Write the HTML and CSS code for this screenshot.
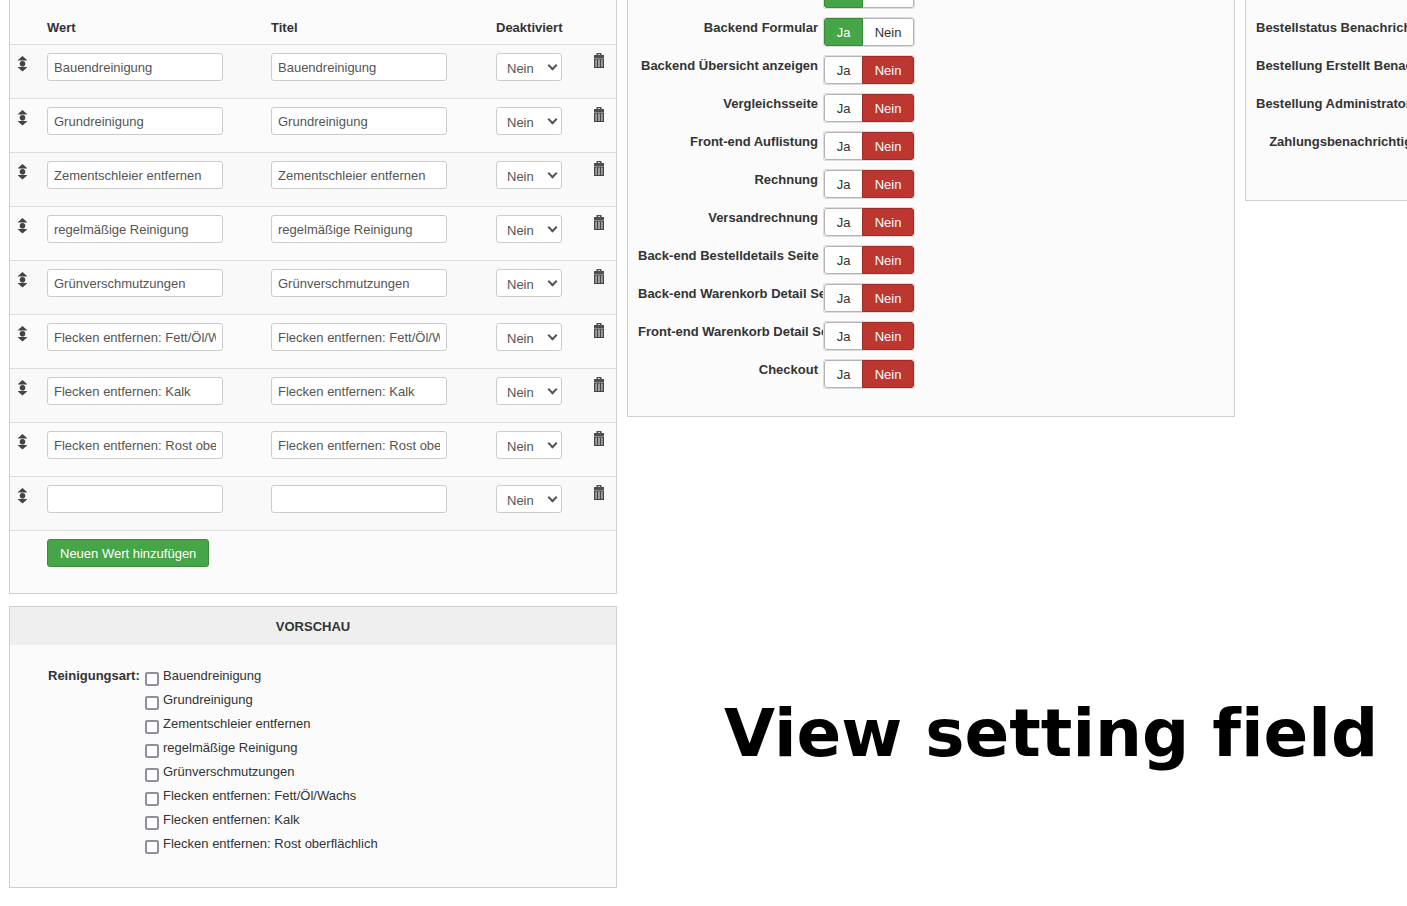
FILE: index.html
```
<!DOCTYPE html>
<html lang="de">
<head>
	<meta charset="utf-8">
	<meta name="viewport" content="width=device-width">
	<title>View setting field</title>
	<link rel="stylesheet" href="styles.css">
</head>
<body>

	<svg class="symbols" aria-hidden="true">
		<symbol id="move" viewBox="0 0 9 16">
			<path d="M4.5 0 9 4v.6H0V4zM4.5 15.6 0 11.6V11h9v.6z"/>
			<circle cx="4.5" cy="7.8" r="2.8"/>
		</symbol>
		<symbol id="trash" viewBox="0 0 12 16">
			<path fill-rule="evenodd" d="M3.5 0h5v2H11v3H1V2h2.500zM5 1.200V2h2v-.8z" opacity=".95"/>
			<path d="M1 5.500h10V15H1z" opacity=".5"/>
			<path d="M1 5.500h10v1H1zM1 14h10v1H1zM1 6h1.200v9H1zM9.800 6H11v9H9.800zM4 6h1v9H4zM7 6h1v9H7z"/>
		</symbol>
	</svg>

	<main class="page">
		<div class="column">
			<section class="card values">
				<table>
					<colgroup>
						<col class="col-move">
						<col class="col-value">
						<col class="col-title">
						<col>
						<col class="col-delete">
					</colgroup>
					<thead>
						<tr>
							<th></th>
							<th>Wert</th>
							<th>Titel</th>
							<th>Deaktiviert</th>
							<th></th>
						</tr>
					</thead>
					<tbody>
						<tr>
							<td><button type="button" class="icon" aria-label="Verschieben"><svg class="move"><use href="#move"/></svg></button></td>
							<td><input type="text" class="text" aria-label="Wert" value="Bauendreinigung"></td>
							<td><input type="text" class="text" aria-label="Titel" value="Bauendreinigung"></td>
							<td><span class="select"><select aria-label="Deaktiviert"><option>Nein</option><option>Ja</option></select></span></td>
							<td><button type="button" class="icon" aria-label="Löschen"><svg class="trash"><use href="#trash"/></svg></button></td>
						</tr>
						<tr>
							<td><button type="button" class="icon" aria-label="Verschieben"><svg class="move"><use href="#move"/></svg></button></td>
							<td><input type="text" class="text" aria-label="Wert" value="Grundreinigung"></td>
							<td><input type="text" class="text" aria-label="Titel" value="Grundreinigung"></td>
							<td><span class="select"><select aria-label="Deaktiviert"><option>Nein</option><option>Ja</option></select></span></td>
							<td><button type="button" class="icon" aria-label="Löschen"><svg class="trash"><use href="#trash"/></svg></button></td>
						</tr>
						<tr>
							<td><button type="button" class="icon" aria-label="Verschieben"><svg class="move"><use href="#move"/></svg></button></td>
							<td><input type="text" class="text" aria-label="Wert" value="Zementschleier entfernen"></td>
							<td><input type="text" class="text" aria-label="Titel" value="Zementschleier entfernen"></td>
							<td><span class="select"><select aria-label="Deaktiviert"><option>Nein</option><option>Ja</option></select></span></td>
							<td><button type="button" class="icon" aria-label="Löschen"><svg class="trash"><use href="#trash"/></svg></button></td>
						</tr>
						<tr>
							<td><button type="button" class="icon" aria-label="Verschieben"><svg class="move"><use href="#move"/></svg></button></td>
							<td><input type="text" class="text" aria-label="Wert" value="regelmäßige Reinigung"></td>
							<td><input type="text" class="text" aria-label="Titel" value="regelmäßige Reinigung"></td>
							<td><span class="select"><select aria-label="Deaktiviert"><option>Nein</option><option>Ja</option></select></span></td>
							<td><button type="button" class="icon" aria-label="Löschen"><svg class="trash"><use href="#trash"/></svg></button></td>
						</tr>
						<tr>
							<td><button type="button" class="icon" aria-label="Verschieben"><svg class="move"><use href="#move"/></svg></button></td>
							<td><input type="text" class="text" aria-label="Wert" value="Grünverschmutzungen"></td>
							<td><input type="text" class="text" aria-label="Titel" value="Grünverschmutzungen"></td>
							<td><span class="select"><select aria-label="Deaktiviert"><option>Nein</option><option>Ja</option></select></span></td>
							<td><button type="button" class="icon" aria-label="Löschen"><svg class="trash"><use href="#trash"/></svg></button></td>
						</tr>
						<tr>
							<td><button type="button" class="icon" aria-label="Verschieben"><svg class="move"><use href="#move"/></svg></button></td>
							<td><input type="text" class="text" aria-label="Wert" value="Flecken entfernen: Fett/Öl/Wachs"></td>
							<td><input type="text" class="text" aria-label="Titel" value="Flecken entfernen: Fett/Öl/Wachs"></td>
							<td><span class="select"><select aria-label="Deaktiviert"><option>Nein</option><option>Ja</option></select></span></td>
							<td><button type="button" class="icon" aria-label="Löschen"><svg class="trash"><use href="#trash"/></svg></button></td>
						</tr>
						<tr>
							<td><button type="button" class="icon" aria-label="Verschieben"><svg class="move"><use href="#move"/></svg></button></td>
							<td><input type="text" class="text" aria-label="Wert" value="Flecken entfernen: Kalk"></td>
							<td><input type="text" class="text" aria-label="Titel" value="Flecken entfernen: Kalk"></td>
							<td><span class="select"><select aria-label="Deaktiviert"><option>Nein</option><option>Ja</option></select></span></td>
							<td><button type="button" class="icon" aria-label="Löschen"><svg class="trash"><use href="#trash"/></svg></button></td>
						</tr>
						<tr>
							<td><button type="button" class="icon" aria-label="Verschieben"><svg class="move"><use href="#move"/></svg></button></td>
							<td><input type="text" class="text" aria-label="Wert" value="Flecken entfernen: Rost oberflächlich"></td>
							<td><input type="text" class="text" aria-label="Titel" value="Flecken entfernen: Rost oberflächlich"></td>
							<td><span class="select"><select aria-label="Deaktiviert"><option>Nein</option><option>Ja</option></select></span></td>
							<td><button type="button" class="icon" aria-label="Löschen"><svg class="trash"><use href="#trash"/></svg></button></td>
						</tr>
						<tr>
							<td><button type="button" class="icon" aria-label="Verschieben"><svg class="move"><use href="#move"/></svg></button></td>
							<td><input type="text" class="text" aria-label="Wert"></td>
							<td><input type="text" class="text" aria-label="Titel"></td>
							<td><span class="select"><select aria-label="Deaktiviert"><option>Nein</option><option>Ja</option></select></span></td>
							<td><button type="button" class="icon" aria-label="Löschen"><svg class="trash"><use href="#trash"/></svg></button></td>
						</tr>
					</tbody>
					<tfoot>
						<tr>
							<td></td>
							<td colspan="4"><button type="button" class="add">Neuen Wert hinzufügen</button></td>
						</tr>
					</tfoot>
				</table>
			</section>

			<section class="card preview">
				<h2>Vorschau</h2>
				<div class="preview-body">
					<strong id="preview-label">Reinigungsart:</strong>
					<div class="checks" role="group" aria-labelledby="preview-label">
						<label><input type="checkbox">Bauendreinigung</label>
						<label><input type="checkbox">Grundreinigung</label>
						<label><input type="checkbox">Zementschleier entfernen</label>
						<label><input type="checkbox">regelmäßige Reinigung</label>
						<label><input type="checkbox">Grünverschmutzungen</label>
						<label><input type="checkbox">Flecken entfernen: Fett/Öl/Wachs</label>
						<label><input type="checkbox">Flecken entfernen: Kalk</label>
						<label><input type="checkbox">Flecken entfernen: Rost oberflächlich</label>
					</div>
				</div>
			</section>
		</div>

		<section class="card display">
			<div class="setting">
				<span class="name"></span>
				<div class="toggle" role="radiogroup" aria-label="Anzeigen">
					<input type="radio" name="s0" id="s0-1" checked><label class="yes" for="s0-1">Ja</label>
					<input type="radio" name="s0" id="s0-0"><label class="no" for="s0-0">Nein</label>
				</div>
			</div>
			<div class="setting">
				<span class="name" id="s1">Backend Formular</span>
				<div class="toggle" role="radiogroup" aria-labelledby="s1">
					<input type="radio" name="s1" id="s1-1" checked><label class="yes" for="s1-1">Ja</label>
					<input type="radio" name="s1" id="s1-0"><label class="no" for="s1-0">Nein</label>
				</div>
			</div>
			<div class="setting">
				<span class="name" id="s2">Backend Übersicht anzeigen</span>
				<div class="toggle" role="radiogroup" aria-labelledby="s2">
					<input type="radio" name="s2" id="s2-1"><label class="yes" for="s2-1">Ja</label>
					<input type="radio" name="s2" id="s2-0" checked><label class="no" for="s2-0">Nein</label>
				</div>
			</div>
			<div class="setting">
				<span class="name" id="s3">Vergleichsseite</span>
				<div class="toggle" role="radiogroup" aria-labelledby="s3">
					<input type="radio" name="s3" id="s3-1"><label class="yes" for="s3-1">Ja</label>
					<input type="radio" name="s3" id="s3-0" checked><label class="no" for="s3-0">Nein</label>
				</div>
			</div>
			<div class="setting">
				<span class="name" id="s4">Front-end Auflistung</span>
				<div class="toggle" role="radiogroup" aria-labelledby="s4">
					<input type="radio" name="s4" id="s4-1"><label class="yes" for="s4-1">Ja</label>
					<input type="radio" name="s4" id="s4-0" checked><label class="no" for="s4-0">Nein</label>
				</div>
			</div>
			<div class="setting">
				<span class="name" id="s5">Rechnung</span>
				<div class="toggle" role="radiogroup" aria-labelledby="s5">
					<input type="radio" name="s5" id="s5-1"><label class="yes" for="s5-1">Ja</label>
					<input type="radio" name="s5" id="s5-0" checked><label class="no" for="s5-0">Nein</label>
				</div>
			</div>
			<div class="setting">
				<span class="name" id="s6">Versandrechnung</span>
				<div class="toggle" role="radiogroup" aria-labelledby="s6">
					<input type="radio" name="s6" id="s6-1"><label class="yes" for="s6-1">Ja</label>
					<input type="radio" name="s6" id="s6-0" checked><label class="no" for="s6-0">Nein</label>
				</div>
			</div>
			<div class="setting">
				<span class="name" id="s7">Back-end Bestelldetails Seite</span>
				<div class="toggle" role="radiogroup" aria-labelledby="s7">
					<input type="radio" name="s7" id="s7-1"><label class="yes" for="s7-1">Ja</label>
					<input type="radio" name="s7" id="s7-0" checked><label class="no" for="s7-0">Nein</label>
				</div>
			</div>
			<div class="setting">
				<span class="name" id="s8">Back-end Warenkorb Detail Seite</span>
				<div class="toggle" role="radiogroup" aria-labelledby="s8">
					<input type="radio" name="s8" id="s8-1"><label class="yes" for="s8-1">Ja</label>
					<input type="radio" name="s8" id="s8-0" checked><label class="no" for="s8-0">Nein</label>
				</div>
			</div>
			<div class="setting">
				<span class="name" id="s9">Front-end Warenkorb Detail Seite</span>
				<div class="toggle" role="radiogroup" aria-labelledby="s9">
					<input type="radio" name="s9" id="s9-1"><label class="yes" for="s9-1">Ja</label>
					<input type="radio" name="s9" id="s9-0" checked><label class="no" for="s9-0">Nein</label>
				</div>
			</div>
			<div class="setting">
				<span class="name" id="s10">Checkout</span>
				<div class="toggle" role="radiogroup" aria-labelledby="s10">
					<input type="radio" name="s10" id="s10-1"><label class="yes" for="s10-1">Ja</label>
					<input type="radio" name="s10" id="s10-0" checked><label class="no" for="s10-0">Nein</label>
				</div>
			</div>
		</section>

		<section class="card mails">
			<div class="setting"><span class="name">Bestellstatus Benachrichtigung</span></div>
			<div class="setting"><span class="name">Bestellung Erstellt Benachrichtigung</span></div>
			<div class="setting"><span class="name">Bestellung Administrator Benachrichtigung</span></div>
			<div class="setting"><span class="name">Zahlungsbenachrichtigung</span></div>
		</section>

		<h1>View setting field</h1>
	</main>

</body>
</html>
```
FILE: styles.css
```
*,
*::after {
	box-sizing: border-box;
}

body {
	margin: 0;
	overflow-x: hidden;
	background-color: #FFF;
	color: #333;
	font-family: "Liberation Sans", Arial, sans-serif;
	font-size: 13px;
	line-height: 20px;
}

input,
select,
button {
	margin: 0;
	font: inherit;
}

.symbols {
	display: none;
}

.page {
	display: grid;
	grid-template-columns: repeat(3, minmax(608px, 1fr));
	grid-template-rows: auto 1fr;
	column-gap: 10px;
	align-items: start;
	padding-left: 9px;
}

.column {
	grid-row: span 2;
}

.card {
	border: 1px solid #D0D0D0;
	background-color: #FBFBFB;
}

/* values table */

.values {
	padding-bottom: 9px;
	border-top: 0;
}

table {
	width: 100%;
	table-layout: fixed;
	border-spacing: 0;
}

.col-move {
	width: 29px;
}
.col-value {
	width: 224px;
}
.col-title {
	width: 225px;
}
.col-delete {
	width: 31px;
}

th {
	height: 44px;
	padding: 8px 8px 6px;
	text-align: left;
	vertical-align: bottom;
}

td {
	height: 54px;
	padding: 8px;
	border-top: 1px solid #DDD;
	vertical-align: top;
}

td:last-child {
	padding-right: 0;
}

tbody tr:nth-child(odd) {
	background-color: #F9F9F9;
}

.text,
select {
	display: block;
	height: 28px;
	border: 1px solid #CCC;
	border-radius: 3px;
	background-color: #FFF;
	color: #555;
}

.text {
	width: 176px;
	padding: 4px 6px;
}

.select {
	position: relative;
	display: block;
	width: 66px;
}
.select::after {
	content: "";
	position: absolute;
	top: 9px;
	right: 6px;
	width: 7px;
	height: 7px;
	border: solid #555;
	border-width: 0 2px 2px 0;
	transform: rotate(45deg);
	pointer-events: none;
}

select {
	width: 100%;
	padding: 5px 10px 4px;
	appearance: none;
}

.icon {
	display: block;
	padding: 0;
	border: 0;
	background: none;
	color: #444;
}

.icon svg {
	display: block;
	height: 16px;
	fill: currentColor;
}

.move {
	width: 9px;
	margin-top: 3px;
}

.trash {
	width: 12px;
}

.add {
	display: block;
	height: 28px;
	padding: 5px 12px 3px;
	border: 1px solid #3B8A3B;
	border-radius: 3px;
	background-color: #46A546;
	color: #FFF;
	line-height: 18px;
}

/* preview */

.preview {
	margin-top: 12px;
}

.preview h2 {
	margin: 0;
	padding: 10px 10px 8px;
	background-color: #EFEFEF;
	font-size: 13px;
	line-height: 20px;
	text-align: center;
	text-transform: uppercase;
}

.preview-body {
	display: flex;
	padding: 21px 38px 29px;
}

.preview-body strong {
	width: 97px;
}

.checks label {
	display: flex;
	height: 24px;
}

.checks input {
	width: 14px;
	height: 14px;
	margin: 6px 4px 0 0;
	border: 2px solid #8F8F9D;
	border-radius: 2px;
	background-color: #FFF;
	appearance: none;
}
.checks input:checked {
	background-color: #46A546;
}

/* yes/no settings */

.display,
.mails {
	overflow: hidden;
	border-top: 0;
	padding: 0 10px 18px;
}

.display .setting:first-child {
	margin-top: -20px;
}

.mails {
	padding: 18px 10px 30px;
}

.setting {
	display: flex;
	gap: 6px;
	height: 28px;
	margin-bottom: 10px;
}

.name {
	flex: none;
	width: 180px;
	font-weight: bold;
	text-align: right;
	white-space: nowrap;
}

.toggle {
	position: relative;
	display: flex;
	border-radius: 2px;
	background-color: #FFF;
	box-shadow: 0 0 0 1px #DDD;
}

.toggle input {
	position: absolute;
	opacity: 0;
}

.toggle label {
	height: 28px;
	padding: 4px 0;
	border: 1px solid #B3B3B3;
	text-align: center;
	cursor: pointer;
}

.yes {
	width: 39px;
	border-radius: 3px 0 0 3px;
}

.no {
	width: 52px;
	margin-left: -1px;
	border-radius: 0 3px 3px 0;
}

.toggle input:checked + label {
	z-index: 1;
	color: #FFF;
}
.toggle input:checked + .yes {
	border-color: #3B8A3B;
	background-color: #46A546;
}
.toggle input:checked + .no {
	border-color: #9B2C27;
	background-color: #BD362F;
}

h1 {
	grid-column: 2 / span 2;
	margin: 277px 0 0;
	padding-left: 97px;
	color: #000;
	font-family: "DejaVu Sans", Verdana, sans-serif;
	font-size: 66px;
	font-weight: bold;
	font-variant-ligatures: none;
	line-height: 80px;
}
```
